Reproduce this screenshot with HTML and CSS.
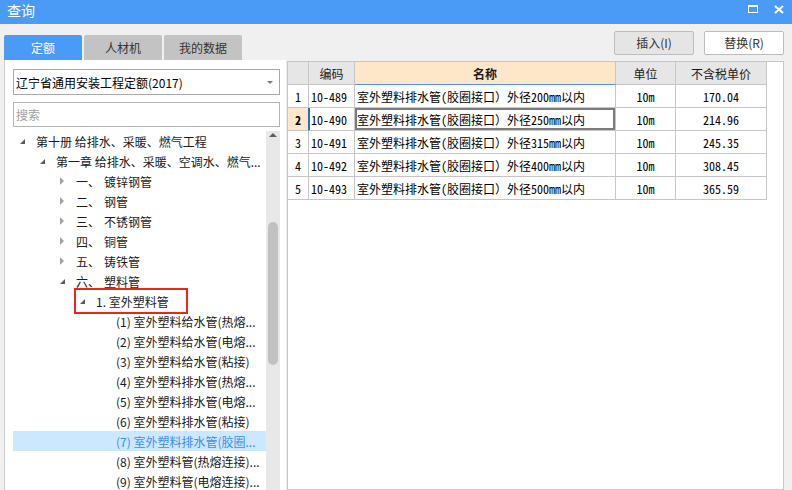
FILE: index.html
```html
<!DOCTYPE html>
<html lang="zh-CN">
<head>
<meta charset="utf-8">
<title>查询</title>
<link rel="stylesheet" href="styles.css">
</head>
<body>
<div class="titlebar">
  <div class="title">查询</div>
  <div class="winctl">
    <svg class="ic-max" width="10" height="8" viewBox="0 0 10 8"><rect x="0.5" y="0.5" width="9" height="7" fill="none" stroke="#fff"/><rect x="0" y="0" width="10" height="2" fill="#fff"/></svg>
    <svg class="ic-close" width="10" height="9" viewBox="0 0 10 9"><path d="M1 1 L9 8 M9 1 L1 8" stroke="#fff" stroke-width="2"/></svg>
  </div>
</div>
<div class="main">
  <div class="left">
    <div class="tabs">
      <div class="tab active">定额</div>
      <div class="tab">人材机</div>
      <div class="tab">我的数据</div>
    </div>
    <div class="panel">
      <div class="select"><span>辽宁省通用安装工程定额(2017)</span><span class="caret"></span></div>
      <div class="search">搜索</div>
      <div class="tree">
        <div class="tree-list">
          <div class="row l0"><span class="tri open"></span><span class="txt">第十册 给排水、采暖、燃气工程</span></div>
          <div class="row l1"><span class="tri open"></span><span class="txt">第一章 给排水、采暖、空调水、燃气...</span></div>
          <div class="row l2"><span class="tri shut"></span><span class="txt">一、<span class="sp">镀锌钢管</span></span></div>
          <div class="row l2"><span class="tri shut"></span><span class="txt">二、<span class="sp">钢管</span></span></div>
          <div class="row l2"><span class="tri shut"></span><span class="txt">三、<span class="sp">不锈钢管</span></span></div>
          <div class="row l2"><span class="tri shut"></span><span class="txt">四、<span class="sp">铜管</span></span></div>
          <div class="row l2"><span class="tri shut"></span><span class="txt">五、<span class="sp">铸铁管</span></span></div>
          <div class="row l2"><span class="tri open"></span><span class="txt">六、<span class="sp">塑料管</span></span></div>
          <div class="row l3"><span class="tri open"></span><span class="txt">1. 室外塑料管</span><span class="mark"></span></div>
          <div class="row l4"><span class="tri"></span><span class="txt">(1) 室外塑料给水管(热熔...</span></div>
          <div class="row l4"><span class="tri"></span><span class="txt">(2) 室外塑料给水管(电熔...</span></div>
          <div class="row l4"><span class="tri"></span><span class="txt">(3) 室外塑料给水管(粘接)</span></div>
          <div class="row l4"><span class="tri"></span><span class="txt">(4) 室外塑料排水管(热熔...</span></div>
          <div class="row l4"><span class="tri"></span><span class="txt">(5) 室外塑料排水管(电熔...</span></div>
          <div class="row l4"><span class="tri"></span><span class="txt">(6) 室外塑料排水管(粘接)</span></div>
          <div class="row l4 sel"><span class="tri"></span><span class="txt">(7) 室外塑料排水管(胶圈...</span></div>
          <div class="row l4"><span class="tri"></span><span class="txt">(8) 室外塑料管(热熔连接)...</span></div>
          <div class="row l4"><span class="tri"></span><span class="txt">(9) 室外塑料管(电熔连接)...</span></div>
        </div>
        <div class="scroll">
          <div class="up"></div>
          <div class="thumb"></div>
        </div>
      </div>
    </div>
  </div>
  <div class="right">
    <div class="toolbar">
      <div class="btn gray">插入(I)</div>
      <div class="btn">替换(R)</div>
    </div>
    <div class="grid-panel">
      <table class="grid">
        <colgroup><col class="c-no"><col class="c-code"><col class="c-name"><col class="c-unit"><col class="c-price"></colgroup>
        <thead>
          <tr><th></th><th>编码</th><th class="hl">名称</th><th>单位</th><th>不含税单价</th></tr>
        </thead>
        <tbody>
          <tr><td class="no">1</td><td>10-489</td><td>室外塑料排水管(胶圈接口）外径200mm以内</td><td class="ctr">10m</td><td class="ctr">170.04</td></tr>
          <tr class="cur"><td class="no">2</td><td class="code">10-490</td><td class="focus">室外塑料排水管(胶圈接口）外径250mm以内</td><td class="ctr">10m</td><td class="ctr">214.96</td></tr>
          <tr><td class="no">3</td><td>10-491</td><td>室外塑料排水管(胶圈接口）外径315mm以内</td><td class="ctr">10m</td><td class="ctr">245.35</td></tr>
          <tr><td class="no">4</td><td>10-492</td><td>室外塑料排水管(胶圈接口）外径400mm以内</td><td class="ctr">10m</td><td class="ctr">308.45</td></tr>
          <tr><td class="no">5</td><td>10-493</td><td>室外塑料排水管(胶圈接口）外径500mm以内</td><td class="ctr">10m</td><td class="ctr">365.59</td></tr>
        </tbody>
      </table>
    </div>
  </div>
</div>
</body>
</html>
```
FILE: styles.css
```css
* { box-sizing: border-box; }
html, body { margin: 0; height: 100%; overflow: hidden; }
body {
  background: #f0f0f0;
  font-family: "Noto Sans CJK SC", "Microsoft YaHei", sans-serif;
  font-size: 12px;
  color: #1a1a1a;
}
.titlebar {
  height: 24px;
  background: #4a9bf5;
  color: #fff;
  display: flex;
  align-items: center;
  justify-content: space-between;
  padding: 0 8px 5px 7px;
}
.title { font-size: 14px; line-height: 16px; }
.winctl { display: flex; align-items: center; gap: 16px; }
.winctl svg { display: block; }
.ic-max { margin-top: -1px; }

.main { display: flex; height: 466px; padding-left: 4px; }
.left { width: 282px; display: flex; flex-direction: column; }
.tabs { display: flex; gap: 2px; margin-top: 11px; height: 25px; }
.tab {
  width: 78px; height: 25px; line-height: 25px;
  text-align: center; background: #c3c3c3; color: #333;
  border-radius: 2px 2px 0 0;
}
.tab.active { background: #4a9bf5; color: #fff; }
.panel {
  flex: 1; background: #fff;
  border-left: 1px solid #cbcbcb;
  padding: 9px 6px 0 8px;
  display: flex; flex-direction: column;
  min-height: 0;
}
.select {
  height: 26px; border: 1px solid #a9a9a9;
  display: flex; align-items: center; justify-content: space-between;
  padding: 0 6px 0 2px; color: #000; font-size: 12px;
}
.caret {
  width: 0; height: 0;
  border-left: 3px solid transparent; border-right: 3px solid transparent;
  border-top: 3px solid #7a7a7a;
}
.search {
  margin-top: 7px; height: 25px; border: 1px solid #b4b4b4;
  padding-left: 2px; line-height: 23px; color: #a0a0a0;
}
.tree { margin-top: 4px; flex: 1; display: flex; min-height: 0; overflow: hidden; }
.tree-list { flex: 1; overflow: hidden; }
.row {
  height: 20px; display: flex; align-items: center;
  white-space: nowrap; position: relative; color: #1a1a1a;
}
.row.l0 { padding-left: 7px; }
.row.l1 { padding-left: 27px; }
.row.l2 { padding-left: 47px; }
.row.l3 { padding-left: 67px; }
.row.l4 { padding-left: 87px; }
.tri { width: 16px; height: 20px; flex: none; position: relative; }
.tri.open::before {
  content: ""; position: absolute; left: 0; top: 8px;
  width: 0; height: 0;
  border-left: 5px solid transparent; border-bottom: 5px solid #5a5a5a;
}
.tri.shut::before {
  content: ""; position: absolute; left: 0; top: 6px;
  width: 0; height: 0;
  border-top: 4px solid transparent; border-bottom: 4px solid transparent;
  border-left: 4px solid #a3a3a3;
}
.txt { overflow: hidden; }
.sp { margin-left: 4px; }
.row.sel { background: #cce8ff; color: #3d8fe6; }
.mark {
  position: absolute; left: 61px; top: -3px;
  width: 114px; height: 26px;
  border: 2px solid #e8261c;
}
.scroll { width: 14px; background: #e8e8e8; flex: none; }
.up {
  width: 0; height: 0; margin: 2px 0 0 3px;
  border-left: 4px solid transparent; border-right: 4px solid transparent;
  border-bottom: 4px solid #5e5e5e;
}
.thumb {
  width: 10px; height: 143px; margin: 85px 0 0 2px;
  background: #c1c1c1; border-radius: 5px;
}

.right { flex: 1; margin: 0 8px 0 1px; display: flex; flex-direction: column; }
.toolbar { height: 37px; display: flex; justify-content: flex-end; gap: 10px; padding-top: 7px; }
.btn {
  width: 80px; height: 24px; line-height: 22px; text-align: center;
  border: 1px solid #bdbdbd; border-radius: 2px; background: #fff; color: #333;
}
.btn.gray { background: #e5e5e5; }
.grid-panel { flex: 1; background: #fff; border: 1px solid #c6c6c6; }
.grid {
  border-collapse: separate; border-spacing: 0; table-layout: fixed;
  width: 479px;
  font-family: "Noto Sans Mono CJK SC", "Noto Sans CJK SC", monospace;
  font-size: 12px; color: #000;
}
.c-no { width: 21px; }
.c-code { width: 46px; }
.c-name { width: 261px; }
.c-unit { width: 60px; }
.c-price { width: 91px; }
.grid th, .grid td {
  height: 23px; padding: 0 2px;
  border-right: 1px solid #c6c6c6; border-bottom: 1px solid #c6c6c6;
  white-space: nowrap; overflow: hidden;
}
.grid th {
  background: #e6e6e6; font-weight: normal; text-align: center;
  font-family: "Noto Sans CJK SC", sans-serif; color: #1a1a1a;
}
.grid th.hl { background: #fee7c9; font-weight: bold; border-bottom-color: #4f94e6; }
.grid td.no { text-align: center; padding: 0; }
.grid td.ctr { text-align: center; }
.cur td.no { background: #fee7c9; font-weight: bold; border-right-color: #1a6fe8; }
.cur td.code { box-shadow: inset 1px 0 0 #1a6fe8; }
.cur td.focus { box-shadow: inset 0 0 0 2px #7b7b7b; }
```
